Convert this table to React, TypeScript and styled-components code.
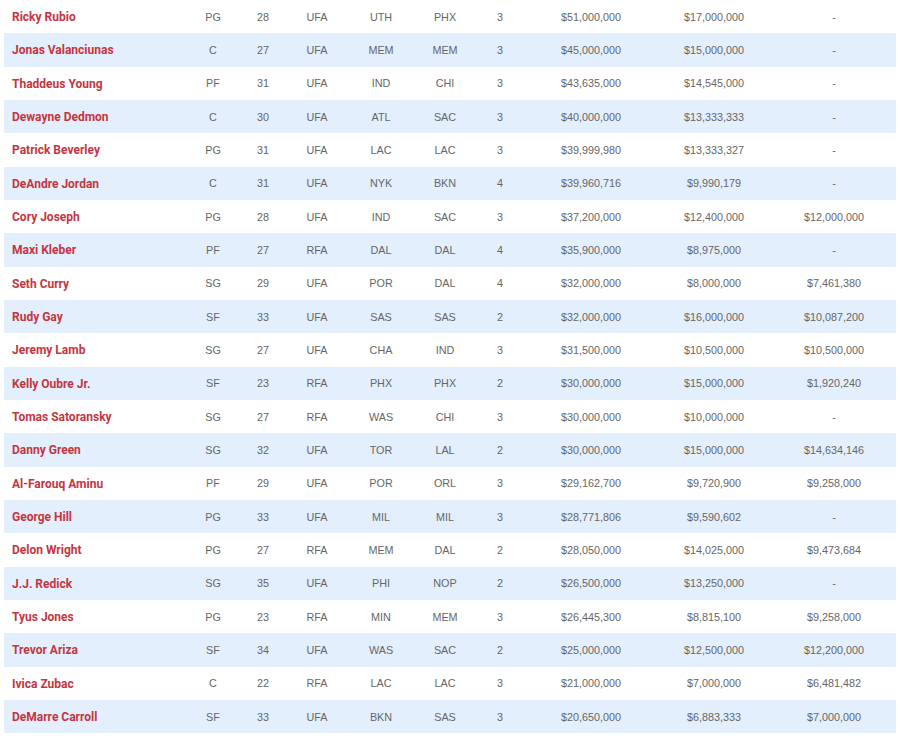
import { ReactElement } from 'react';
import styled, { createGlobalStyle } from 'styled-components';

const GlobalStyle = createGlobalStyle`
  html, body {
    margin: 0;
    padding: 0;
    background: #ffffff;
  }
`;

const Page = styled.div`
  padding: 0 4px;
  width: 892px;
`;

const Table = styled.div`
  display: flex;
  flex-direction: column;
`;

const Row = styled.div<{ $striped: boolean }>`
  display: grid;
  grid-template-columns: 184px 50px 50px 58px 70px 58px 52px 130px 116px 124px;
  align-items: center;
  height: 33.33px;
  background-color: ${p => (p.$striped ? '#e3effd' : '#ffffff')};
`;

const NameCell = styled.div`
  padding: 1px 0 0 8px;
  color: #c5353f;
  font-family: Roboto, 'Liberation Sans', Arial, sans-serif;
  font-size: 12px;
  font-weight: 700;
  white-space: nowrap;
`;

const Cell = styled.div`
  color: #666666;
  font-family: 'Liberation Sans', Arial, sans-serif;
  font-size: 10.8px;
  text-align: center;
  white-space: nowrap;
`;

type Signing = [string, string, string, string, string, string, string, string, string, string];

const signings: Signing[] = [
  ['Ricky Rubio', 'PG', '28', 'UFA', 'UTH', 'PHX', '3', '$51,000,000', '$17,000,000', '-'],
  ['Jonas Valanciunas', 'C', '27', 'UFA', 'MEM', 'MEM', '3', '$45,000,000', '$15,000,000', '-'],
  ['Thaddeus Young', 'PF', '31', 'UFA', 'IND', 'CHI', '3', '$43,635,000', '$14,545,000', '-'],
  ['Dewayne Dedmon', 'C', '30', 'UFA', 'ATL', 'SAC', '3', '$40,000,000', '$13,333,333', '-'],
  ['Patrick Beverley', 'PG', '31', 'UFA', 'LAC', 'LAC', '3', '$39,999,980', '$13,333,327', '-'],
  ['DeAndre Jordan', 'C', '31', 'UFA', 'NYK', 'BKN', '4', '$39,960,716', '$9,990,179', '-'],
  ['Cory Joseph', 'PG', '28', 'UFA', 'IND', 'SAC', '3', '$37,200,000', '$12,400,000', '$12,000,000'],
  ['Maxi Kleber', 'PF', '27', 'RFA', 'DAL', 'DAL', '4', '$35,900,000', '$8,975,000', '-'],
  ['Seth Curry', 'SG', '29', 'UFA', 'POR', 'DAL', '4', '$32,000,000', '$8,000,000', '$7,461,380'],
  ['Rudy Gay', 'SF', '33', 'UFA', 'SAS', 'SAS', '2', '$32,000,000', '$16,000,000', '$10,087,200'],
  ['Jeremy Lamb', 'SG', '27', 'UFA', 'CHA', 'IND', '3', '$31,500,000', '$10,500,000', '$10,500,000'],
  ['Kelly Oubre Jr.', 'SF', '23', 'RFA', 'PHX', 'PHX', '2', '$30,000,000', '$15,000,000', '$1,920,240'],
  ['Tomas Satoransky', 'SG', '27', 'RFA', 'WAS', 'CHI', '3', '$30,000,000', '$10,000,000', '-'],
  ['Danny Green', 'SG', '32', 'UFA', 'TOR', 'LAL', '2', '$30,000,000', '$15,000,000', '$14,634,146'],
  ['Al-Farouq Aminu', 'PF', '29', 'UFA', 'POR', 'ORL', '3', '$29,162,700', '$9,720,900', '$9,258,000'],
  ['George Hill', 'PG', '33', 'UFA', 'MIL', 'MIL', '3', '$28,771,806', '$9,590,602', '-'],
  ['Delon Wright', 'PG', '27', 'RFA', 'MEM', 'DAL', '2', '$28,050,000', '$14,025,000', '$9,473,684'],
  ['J.J. Redick', 'SG', '35', 'UFA', 'PHI', 'NOP', '2', '$26,500,000', '$13,250,000', '-'],
  ['Tyus Jones', 'PG', '23', 'RFA', 'MIN', 'MEM', '3', '$26,445,300', '$8,815,100', '$9,258,000'],
  ['Trevor Ariza', 'SF', '34', 'UFA', 'WAS', 'SAC', '2', '$25,000,000', '$12,500,000', '$12,200,000'],
  ['Ivica Zubac', 'C', '22', 'RFA', 'LAC', 'LAC', '3', '$21,000,000', '$7,000,000', '$6,481,482'],
  ['DeMarre Carroll', 'SF', '33', 'UFA', 'BKN', 'SAS', '3', '$20,650,000', '$6,883,333', '$7,000,000'],
];

function App(): ReactElement {
  return (
    <>
      <GlobalStyle />
      <Page>
        <Table>
          {signings.map(([name, ...rest], i) => (
            <Row key={name} $striped={i % 2 === 1}>
              <NameCell>{name}</NameCell>
              {rest.map((value, j) => (
                <Cell key={j}>{value}</Cell>
              ))}
            </Row>
          ))}
        </Table>
      </Page>
    </>
  );
}

export default App;
